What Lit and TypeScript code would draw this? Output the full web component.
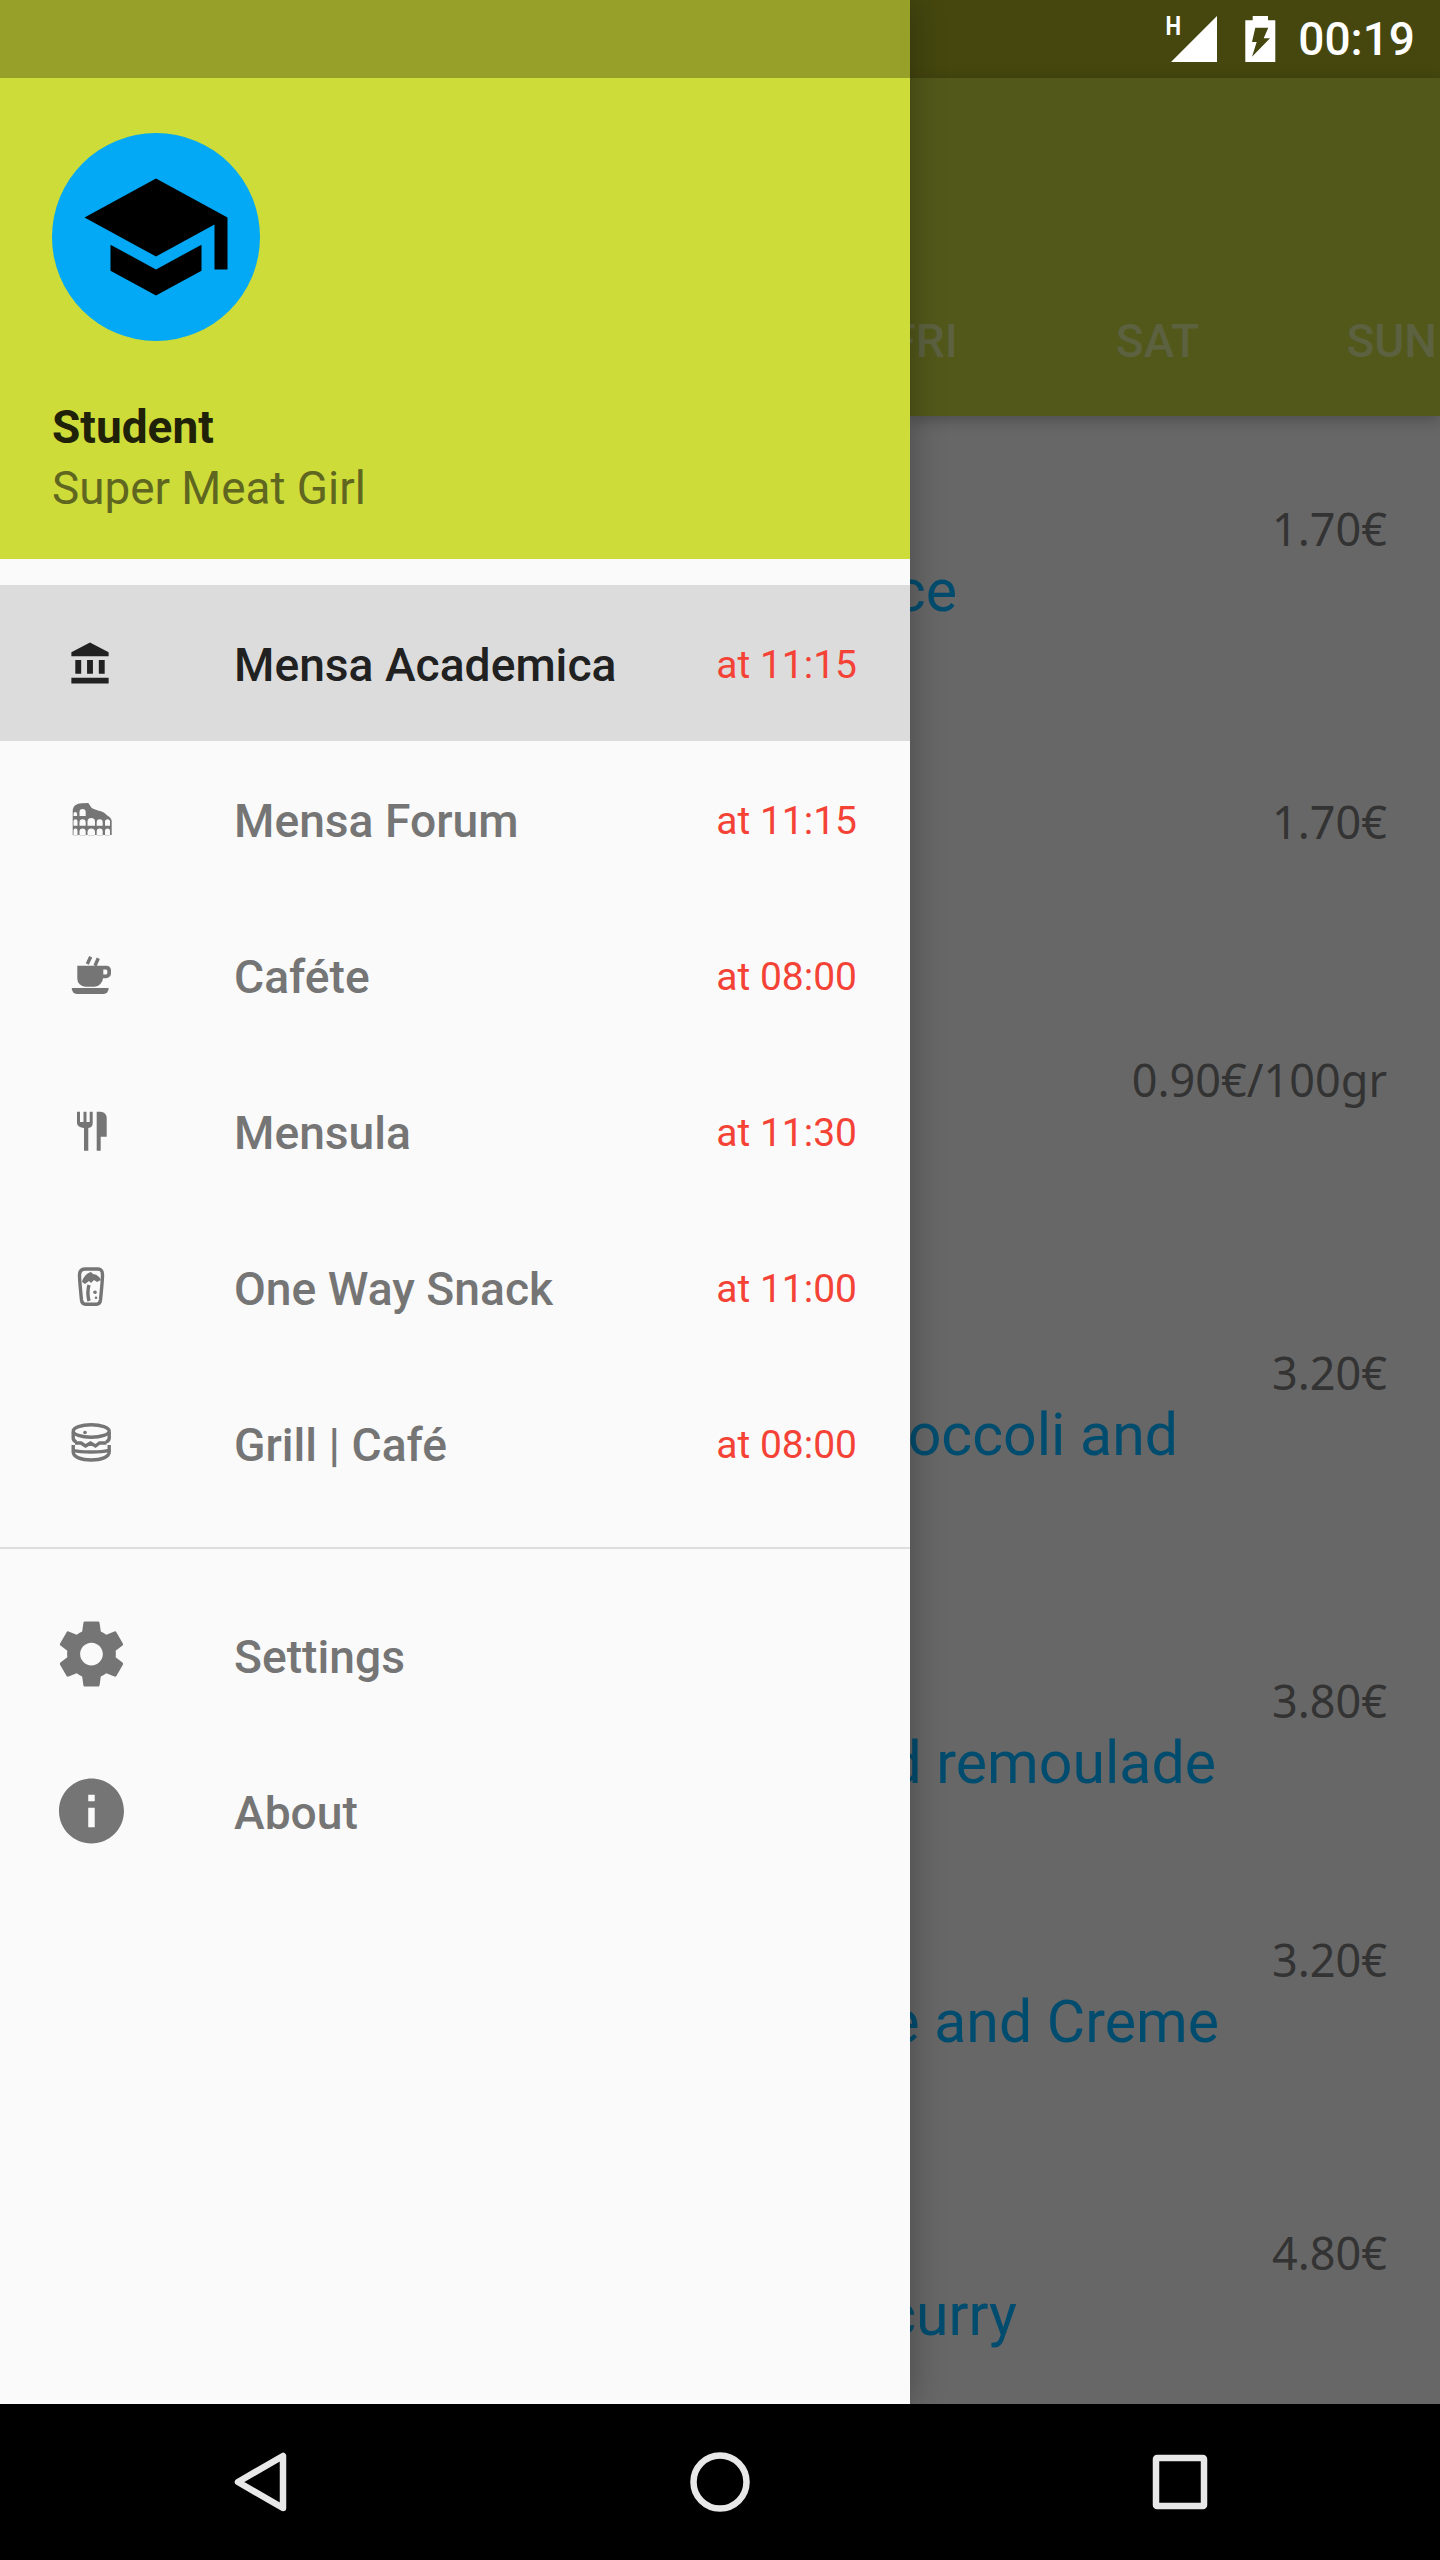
import { LitElement, html, svg, css } from 'lit';
import { customElement } from 'lit/decorators.js';

// holes of the colosseum icon, one row per storey: [x, width]
const ARCHES: [number, number][] = [[25.5, 4], [31.5, 6.2], [39.5, 7.5], [48.7, 6], [57, 5]];

function arch(x: number, w: number, top: number, bottom: number) {
  const r = w / 2;
  return `M${x} ${bottom}V${top + r}a${r} ${r} 0 0 1 ${w} 0V${bottom}z`;
}

const colosseumPath = [
  'M24.7 58V34c0-5 4-7.5 9-7.7l6.6-.2 3.4 5c3 1.6 5.5 2.2 8.3 2.9 3 .8 5 2.2 6.7 4 2.2 1.6 5 3.4 5 6V58z',
  arch(25.5, 3.6, 35, 39),
  arch(31.5, 6.2, 32, 39),
  ...ARCHES.map(([x, w]) => arch(x, w, x === 39.5 ? 41 : 42.3, 48.7)),
  ...ARCHES.map(([x, w]) => arch(x, w, 51.5, 58.2)),
].join('');

const ICONS: Record<string, unknown> = {
  bank: html`<svg viewBox="-9.93 -9.93 42.86 42.86"><path d="M4 10v7h3v-7H4zm6 0v7h3v-7h-3zM2 22h19v-3H2v3zm14-12v7h3v-7h-3zm-4.5-9L2 6v2h19V6l-9.5-5z"/></svg>`,
  colosseum: html`<svg viewBox="0 0 84 84"><path fill-rule="evenodd" d="${colosseumPath}"/></svg>`,
  coffee: html`<svg viewBox="0 0 84 84">
    <path fill-rule="evenodd" d="M29.3 32.7H58.5a4.5 4.5 0 0 1 4.5 4.5v3a5 5 0 0 1-5 5h-3a9 9 0 0 1-8.5 8.5H37.5a8 8 0 0 1-8.2-8.2zM55.3 36.5v5h2.5a1.5 1.5 0 0 0 1.5-1.5v-2a1.5 1.5 0 0 0-1.5-1.5z"/>
    <path d="M23.7 55H60.7a5 6 0 0 1-5 6H28.7a5 6 0 0 1-5-6z"/>
    ${svg`<path class="line" d="M42.7 23.7L39.3 31M50.3 25.3L47 32.7"/>`}
  </svg>`,
  cutlery: html`<svg viewBox="0 0 84 84">
    <path d="M29 22.7h3V33h3.5V22.7h3V33h3.2V22.7h3V34a5 5 0 0 1-4.4 5v22.7H36V39a7 5 0 0 1-7-5z"/>
    <path d="M48.7 22.7h4a6 6 0 0 1 6 6V47.7h-6V61.7h-4z"/>
  </svg>`,
  snack: html`<svg viewBox="0 0 84 84">
    <path class="line" d="M31.5 30c0-4 2-6 6-6h12c4 0 5 2 5 6 0 5-1.500 20-2 25-.4 3-1.500 4.200-4 4.200H37.500c-2.500 0-3.600-1.200-4-4.200-.5-5-2-20-2-25z"/>
    <path d="M34 37c1-5 5-9 9-10l2 2c3 0 7 3 8 6l-4 2-3-2-3 3-2-2-4 3z"/>
    <path class="line" d="M41 40c-1.500 5-1.500 10 0 16"/>
    <circle cx="47" cy="47.300" r="1.800"/><circle cx="48" cy="52.700" r="1.300"/>
  </svg>`,
  burger: html`<svg viewBox="0 0 84 84">
    <ellipse class="line" cx="43.200" cy="30" rx="18" ry="6.300"/>
    <circle cx="37" cy="31.500" r="1.800"/>
    <path class="line" d="M25.200 31v6c0 2 1 3 3 4M61.200 31v6c0 2-1 3-3 4M27 42h6l4.500 3 5-3 5 3 4-3h7"/>
    <path class="line" d="M25.200 44v7c0 5 8 8 18 8s18-3 18-8v-7M26 49.500c6 2 28 2 34 0"/>
  </svg>`,
  settings: html`<svg viewBox="-1.38 -0.62 25.85 25.85"><path d="M19.43 12.98c.04-.32.07-.64.07-.98s-.03-.66-.07-.98l2.11-1.65c.19-.15.24-.42.12-.64l-2-3.46c-.12-.22-.39-.3-.61-.22l-2.49 1c-.52-.4-1.08-.73-1.69-.98l-.38-2.65C14.46 2.18 14.25 2 14 2h-4c-.25 0-.46.18-.49.42l-.38 2.65c-.61.25-1.17.59-1.69.98l-2.49-1c-.23-.09-.49 0-.61.22l-2 3.46c-.13.22-.07.49.12.64l2.11 1.65c-.04.32-.07.65-.07.98s.03.66.07.98l-2.11 1.65c-.19.15-.24.42-.12.64l2 3.46c.12.22.39.3.61.22l2.49-1c.52.4 1.08.73 1.69.98l.38 2.65c.03.24.24.42.49.42h4c.25 0 .46-.18.49-.42l.38-2.65c.61-.25 1.17-.59 1.69-.98l2.49 1c.23.09.49 0 .61-.22l2-3.46c.12-.22.07-.49-.12-.64l-2.11-1.65zM12 15.5c-1.93 0-3.5-1.57-3.5-3.5s1.57-3.5 3.5-3.5 3.5 1.57 3.5 3.5-1.57 3.5-3.5 3.5z"/></svg>`,
  info: html`<svg viewBox="-1.38 -0.92 25.85 25.85"><path d="M12 2C6.48 2 2 6.48 2 12s4.48 10 10 10 10-4.48 10-10S17.52 2 12 2zm1 15h-2v-6h2v6zm0-8h-2V7h2v2z"/></svg>`,
};

const MENSAS = [
  { name: 'Mensa Academica', time: 'at 11:15', icon: 'bank', active: true },
  { name: 'Mensa Forum', time: 'at 11:15', icon: 'colosseum' },
  { name: 'Caféte', time: 'at 08:00', icon: 'coffee' },
  { name: 'Mensula', time: 'at 11:30', icon: 'cutlery' },
  { name: 'One Way Snack', time: 'at 11:00', icon: 'snack' },
  { name: 'Grill | Café', time: 'at 08:00', icon: 'burger' },
];

// height is the room a dish takes in the list, end is where its title stops
const DISHES = [
  { price: '1.70€', name: 'Rice', height: 293, end: 483 },
  { price: '1.70€', name: '', height: 258, end: 0 },
  { price: '0.90€/100gr', name: '', height: 293, end: 0 },
  { price: '3.20€', name: 'Broccoli and', height: 328, end: 262 },
  { price: '3.80€', name: 'and remoulade', height: 259, end: 224 },
  { price: '3.20€', name: 'Sauce and Creme', height: 293, end: 221 },
  { price: '4.80€', name: 'Thai curry', height: 200, end: 423 },
];

@customElement('app-root')
export class AppRoot extends LitElement {
  static styles = css`
    :host {
      display: block;
      width: 1440px;
      height: 2560px;
      font-family: Roboto, sans-serif;
      overflow: hidden;
    }

    .main {
      display: flex;
      height: 2404px;
    }

    /* drawer */
    .drawer {
      position: relative;
      z-index: 2;
      width: 910px;
      flex: none;
      background: #fafafa;
      box-shadow: 0 0 32px rgba(0, 0, 0, 0.3);
    }
    .drawer-status {
      height: 78px;
      background: #97a028;
    }
    .header {
      height: 426px;
      padding: 55px 52px 0;
      background: #cddc39;
    }
    .avatar {
      width: 208px;
      height: 208px;
      margin-bottom: 56px;
      border-radius: 50%;
      background: #03a9f4;
    }
    .avatar svg {
      display: block;
      width: 156px;
      height: 156px;
      padding: 26px;
    }
    .student {
      font-size: 46px;
      font-weight: 700;
      line-height: 61px;
      color: #1f2208;
    }
    .role {
      font-size: 45.8px;
      line-height: 61px;
      color: #5f6620;
    }
    .menu {
      padding-top: 26px;
    }
    .row {
      display: flex;
      align-items: center;
      height: 156px;
      padding: 0 53px 0 48px;
      font-size: 46.2px;
      font-weight: 500;
      color: #757575;
    }
    .row.active {
      background: #dcdcdc;
      color: #212121;
    }
    .icon {
      width: 84px;
      height: 84px;
      margin-right: 102px;
      fill: currentColor;
    }
    .icon svg {
      display: block;
      width: 84px;
      height: 84px;
    }
    .icon .line {
      fill: none;
      stroke: currentColor;
      stroke-width: 3.4;
    }
    .label {
      flex: 1;
      padding-top: 4px;
    }
    .time {
      padding-top: 3px;
      font-size: 39px;
      font-weight: 400;
      color: #f44336;
    }
    .divider {
      height: 2px;
      margin: 26px 0 28px;
      background: #dedede;
    }

    /* what the drawer covers */
    .content {
      flex: 1;
      min-width: 0;
      overflow: hidden;
      background: #676767;
    }
    .status {
      display: flex;
      align-items: center;
      justify-content: flex-end;
      height: 78px;
      padding-right: 25px;
      background: #45470f;
      color: #fff;
    }
    .signal {
      position: relative;
      width: 52px;
      height: 52px;
      margin-right: 28px;
    }
    .signal svg,
    .battery {
      display: block;
      fill: #fff;
    }
    .net {
      position: absolute;
      left: -1px;
      top: 0;
      font-size: 26px;
      font-weight: 700;
      line-height: 26px;
      transform: scaleX(0.85);
    }
    .battery {
      margin-right: 22px;
    }
    .clock {
      font-size: 46px;
      font-weight: 500;
    }
    .bar {
      position: relative;
      display: flex;
      align-items: flex-end;
      justify-content: flex-end;
      height: 338px;
      padding-right: 3px;
      background: #52581a;
      box-shadow: 0 4px 14px rgba(0, 0, 0, 0.25);
    }
    .tab {
      height: 102px;
      margin-left: 147px;
      font-size: 46px;
      font-weight: 500;
      color: #5c6140;
    }
    .tab.first {
      margin-right: 11px;
    }
    .dishes {
      padding-top: 80px;
    }
    .dish {
      font-size: 45px;
      line-height: 66px;
    }
    .price {
      padding-right: 53px;
      text-align: right;
      font-family: 'Noto Sans', sans-serif;
      color: #333;
    }
    .title {
      display: flex;
      justify-content: flex-end;
      margin-top: -4px;
      font-size: 59px;
      white-space: nowrap;
      color: #004c6e;
    }

    /* navigation bar */
    .nav {
      display: flex;
      justify-content: center;
      align-items: center;
      height: 156px;
      background: #000;
    }
    .nav svg {
      display: block;
      width: 84px;
      height: 84px;
      margin: 0 188px;
      fill: none;
      stroke: #e8e8e8;
      stroke-width: 6.5;
      stroke-linejoin: round;
    }
  `;

  renderRow(item: { name: string; time?: string; icon: string; active?: boolean }) {
    return html`
      <div class="row ${item.active ? 'active' : ''}">
        <div class="icon">${ICONS[item.icon]}</div>
        <div class="label">${item.name}</div>
        ${item.time ? html`<div class="time">${item.time}</div>` : ''}
      </div>
    `;
  }

  render() {
    return html`
      <div class="main">
        <div class="drawer">
          <div class="drawer-status"></div>
          <div class="header">
            <div class="avatar">
              <svg viewBox="0 0 24 24"><path d="M5 13.18v4L12 21l7-3.82v-4L12 17l-7-3.82zM12 3L1 9l11 6 9-4.91V17h2V9L12 3z"/></svg>
            </div>
            <div class="student">Student</div>
            <div class="role">Super Meat Girl</div>
          </div>
          <div class="menu">
            ${MENSAS.map((m) => this.renderRow(m))}
            <div class="divider"></div>
            ${this.renderRow({ name: 'Settings', icon: 'settings' })}
            ${this.renderRow({ name: 'About', icon: 'info' })}
          </div>
        </div>

        <div class="content">
          <div class="status">
            <div class="signal">
              <svg width="52" height="52" viewBox="0 0 52 52"><path d="M6 49L52 3V49z"/></svg>
              <span class="net">H</span>
            </div>
            <svg class="battery" width="31" height="47" viewBox="0 0 31 47">
              <path fill-rule="evenodd" d="M7.700 0H23V4.300H30.300V46H.3V4.300H7.700zM10.300 11.700H23.300L18.700 22.300H25L7 40.700 11.700 26H7z"/>
            </svg>
            <span class="clock">00:19</span>
          </div>
          <div class="bar">
            <span class="tab first">FRI</span>
            <span class="tab">SAT</span>
            <span class="tab">SUN</span>
          </div>
          <div class="dishes">
            ${DISHES.map((d) => html`
              <div class="dish" style="height:${d.height}px">
                <div class="price">${d.price}</div>
                ${d.name ? html`<div class="title" style="padding-right:${d.end}px"><span>${d.name}</span></div>` : ''}
              </div>
            `)}
          </div>
        </div>
      </div>

      <div class="nav">
        <svg viewBox="0 0 84 84"><path d="M65 16V68L20 42z"/></svg>
        <svg viewBox="0 0 84 84"><circle cx="42" cy="42" r="26.500"/></svg>
        <svg viewBox="0 0 84 84"><rect x="18" y="18" width="48" height="48" rx="1"/></svg>
      </div>
    `;
  }
}
